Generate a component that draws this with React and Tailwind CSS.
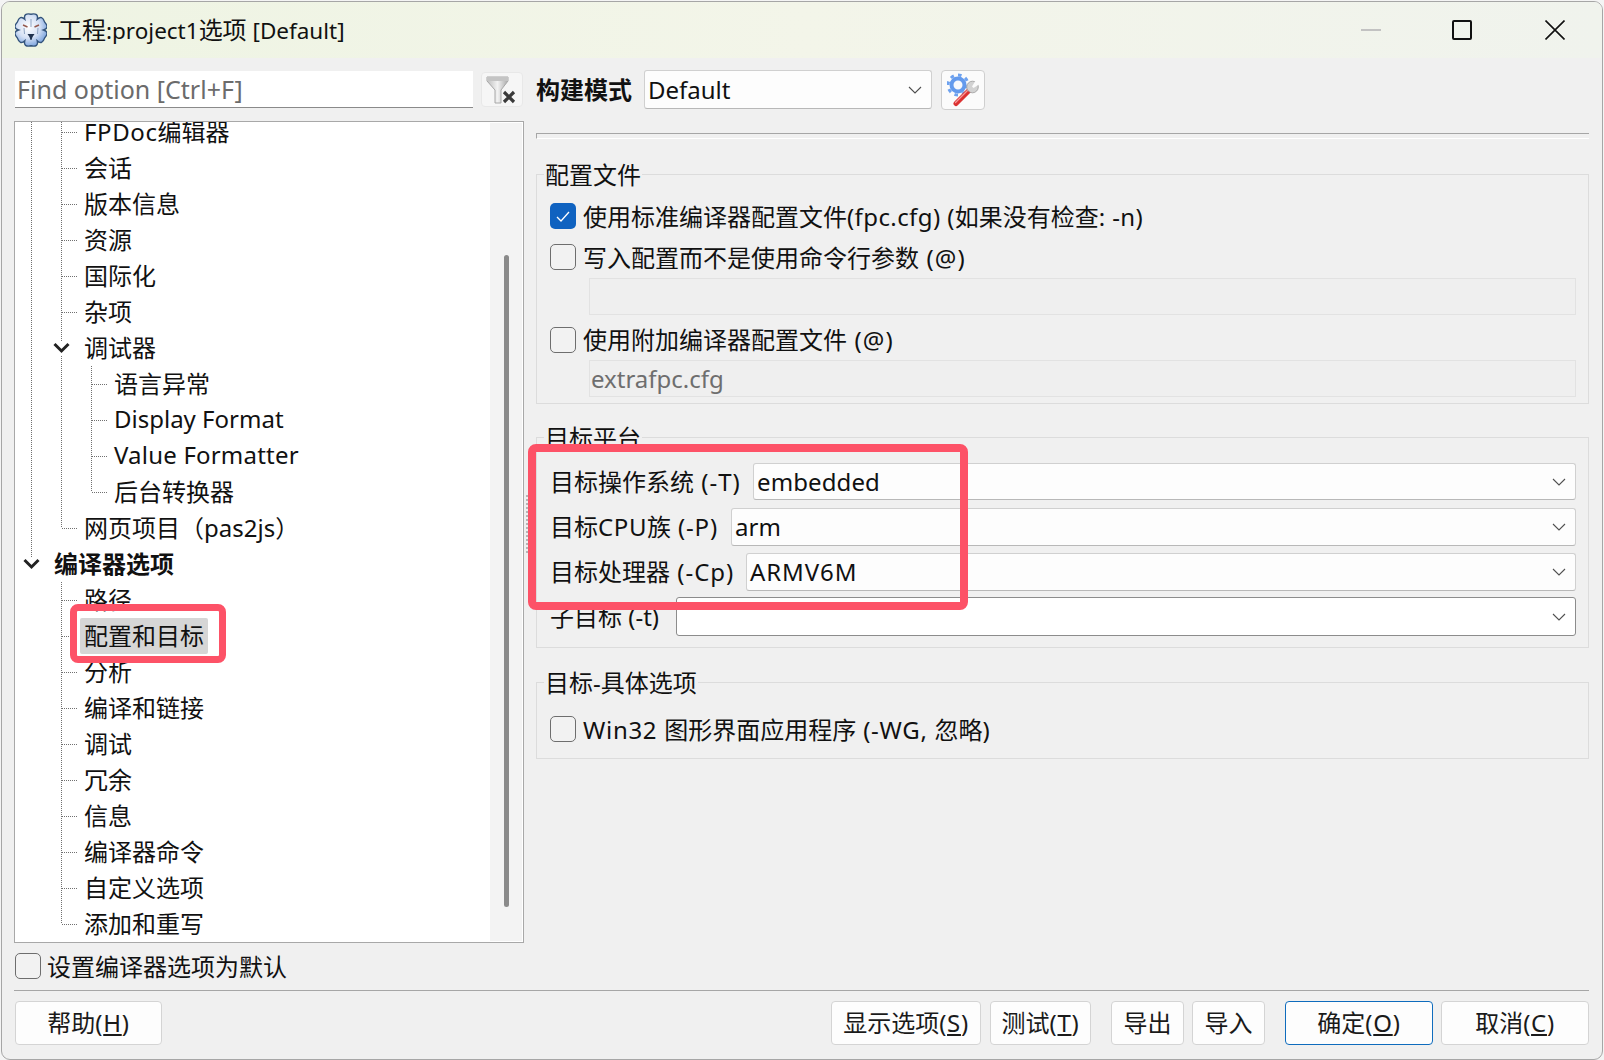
import React from 'react';

const TREE = [
  { label: 'FPDoc编辑器', node: <><span className="tracking-[0.6px]">FPDoc</span>编辑器</>, level: 1, l0: 'full', l1: 'full' },
  { label: '会话', level: 1, l0: 'full', l1: 'full' },
  { label: '版本信息', level: 1, l0: 'full', l1: 'full' },
  { label: '资源', level: 1, l0: 'full', l1: 'full' },
  { label: '国际化', level: 1, l0: 'full', l1: 'full' },
  { label: '杂项', level: 1, l0: 'full', l1: 'full' },
  { label: '调试器', level: 1, l0: 'full', l1: 'full', open: true },
  { label: '语言异常', level: 2, l0: 'full', l1: 'full', l2: 'full' },
  { label: 'Display Format', node: <span className="block pb-[2px]">Display Format</span>, level: 2, l0: 'full', l1: 'full', l2: 'full' },
  { label: 'Value Formatter', node: <span className="block pb-[2px] tracking-[0.2px]">Value Formatter</span>, level: 2, l0: 'full', l1: 'full', l2: 'full' },
  { label: '后台转换器', level: 2, l0: 'full', l1: 'full', l2: 'half' },
  { label: '网页项目（pas2js）', level: 1, l0: 'full', l1: 'half' },
  { label: '编译器选项', level: 0, l0: 'half', open: true, bold: true },
  { label: '路径', level: 1, l1: 'full' },
  { label: '配置和目标', level: 1, l1: 'full', selected: true },
  { label: '分析', level: 1, l1: 'full' },
  { label: '编译和链接', level: 1, l1: 'full' },
  { label: '调试', level: 1, l1: 'full' },
  { label: '冗余', level: 1, l1: 'full' },
  { label: '信息', level: 1, l1: 'full' },
  { label: '编译器命令', level: 1, l1: 'full' },
  { label: '自定义选项', level: 1, l1: 'full' },
  { label: '添加和重写', level: 1, l1: 'half' },
];

const INDENT = { 0: 39, 1: 69, 2: 99 };
const COLS = { l0: 16.5, l1: 46.5, l2: 76.5 };

// dotted connectors + chevron for one tree row
const TreeGuides = ({ row }) => {
  const width = INDENT[row.level];
  const ownCol = [COLS.l0, COLS.l1, COLS.l2][row.level];
  return (
    <svg width={width} height="36" className="shrink-0">
      <g stroke="#707070" strokeDasharray="1 1" shapeRendering="crispEdges">
        {['l0', 'l1', 'l2'].map((k) =>
          row[k] ? <line key={k} x1={COLS[k]} x2={COLS[k]} y1="0" y2={row[k] === 'full' ? 36 : 18} /> : null
        )}
        {!row.open && row.level > 0 && <line x1={ownCol} x2={ownCol + 15} y1="18.5" y2="18.5" />}
      </g>
      {row.open && (
        <>
          <rect x={ownCol - 9} y="11" width="18" height="14" fill="#fff" />
          <path d={`M${ownCol - 7} 14 L${ownCol} 21 L${ownCol + 7} 14`} fill="none" stroke="#222" strokeWidth="3" />
        </>
      )}
    </svg>
  );
};

const Chevron = () => (
  <svg width="14" height="8" viewBox="0 0 14 8" className="shrink-0">
    <path d="M1 1 L7 7 L13 1" fill="none" stroke="#505050" strokeWidth="1.1" />
  </svg>
);

const Checkbox = ({ checked }) =>
  checked ? (
    <span className="flex h-[26px] w-[26px] shrink-0 items-center justify-center rounded-[5px] bg-[#0f62c0]">
      <svg width="14" height="11" viewBox="0 0 14 11">
        <path d="M1 6 L5 10 L13 1" fill="none" stroke="#fff" strokeWidth="1.3" />
      </svg>
    </span>
  ) : (
    <span className="h-[26px] w-[26px] shrink-0 rounded-[5px] border border-[#6e6e6e] bg-[#f2f2f2]" />
  );

const CheckRow = ({ checked, className, textClass, children }) => (
  <div className={`flex h-[26px] items-center whitespace-nowrap ${className || ''}`}>
    <Checkbox checked={checked} />
    <span className={textClass || 'ml-[7px] pt-[2px]'}>{children}</span>
  </div>
);

const Group = ({ title, titleLeft, className, children }) => (
  <div className={`relative w-[1053px] border border-[#dcdcdc] ${className}`}>
    <div className={`absolute top-[-18px] h-[36px] bg-[#f0f0f0] leading-[36px] ${titleLeft}`}>{title}</div>
    {children}
  </div>
);

const SelectBox = ({ value, strong, className }) => (
  <div
    className={`flex items-center justify-between rounded-[3px] border pl-[3px] pr-[9px] ${
      strong ? 'border-[#8c8c8c] bg-white' : 'border-[#d0d0d0] border-b-[#b8b8b8] bg-[#fdfdfd]'
    } ${className}`}
  >
    <span>{value}</span>
    <Chevron />
  </div>
);

const TargetRow = ({ label, labelWidth, pad, value, strong, className }) => (
  <div className={`flex items-center ${className}`}>
    <div className={`shrink-0 whitespace-nowrap ${labelWidth} ${pad}`}>{label}</div>
    <SelectBox value={value} strong={strong} className="h-full flex-1" />
  </div>
);

const DisabledInput = ({ value, className }) => (
  <div
    className={`ml-[39px] h-[37px] w-[987px] border border-[#e2e2e2] bg-[#efefef] pl-px leading-[35px] text-[#6e6e6e] ${className}`}
  >
    {value}
  </div>
);

const Btn = ({ w, primary, className, children }) => (
  <button
    className={`flex h-[44px] shrink-0 items-center justify-center rounded-[4px] border bg-[#fdfdfd] text-[#1a1a1a] ${w} ${
      primary ? 'border-[#0f6cbd]' : 'border-[#d4d4d4]'
    } ${className || ''}`}
  >
    {children}
  </button>
);

// label with its underlined access key, e.g. 帮助(H)
const Mnemonic = ({ text, keyChar }) => (
  <span>
    {text}
    <span className="tracking-[0.7px]">
      (<span className="underline">{keyChar}</span>)
    </span>
  </span>
);

// six rounded lobes, the gear outline of the app icon
const gearPath = (() => {
  const cx = 16;
  const cy = 17;
  const at = (deg, r) => {
    const a = (deg * Math.PI) / 180;
    return `${(cx + r * Math.cos(a)).toFixed(2)} ${(cy + r * Math.sin(a)).toFixed(2)}`;
  };
  let d = `M${at(-120, 12.5)}`;
  for (let i = 0; i < 6; i++) {
    const lobe = -90 + i * 60;
    d += ` Q${at(lobe - 24, 19)} ${at(lobe, 15.8)} Q${at(lobe + 24, 19)} ${at(lobe + 30, 12.5)}`;
  }
  return d + ' Z';
})();

const LazarusLogo = () => (
  <svg width="32" height="34" viewBox="0 0 32 34" className="shrink-0">
    <defs>
      <radialGradient id="gearFill" cx="0.42" cy="0.4" r="0.7">
        <stop offset="0" stopColor="#ffffff" />
        <stop offset="0.5" stopColor="#d5e1f5" />
        <stop offset="1" stopColor="#6594d8" />
      </radialGradient>
    </defs>
    <path d={gearPath} fill="url(#gearFill)" stroke="#34547c" strokeWidth="1.4" />
    <path d="M8 12 L12.5 14 M24 12 L19.5 14" stroke="#94584c" strokeWidth="1.4" fill="none" />
    <path d="M9 15 L9.5 21 M23 15 L22.5 21 M16 6 L16 14" stroke="#8fa5c4" strokeWidth="1" fill="none" />
    <path d="M12.5 21 L19.5 21 L17.5 24 L16.5 27 L15.5 27 L14.5 24 Z" fill="#20324e" />
  </svg>
);

const FilterClearIcon = () => (
  <svg width="32" height="30" viewBox="0 0 32 30">
    <defs>
      <linearGradient id="funnelFill" x1="0" x2="1" y1="0" y2="0">
        <stop offset="0" stopColor="#bdbdbd" />
        <stop offset="0.5" stopColor="#f2f2f2" />
        <stop offset="1" stopColor="#a9a9a9" />
      </linearGradient>
    </defs>
    <path d="M1 2 H22 V6 L15 15 V28 H9 V15 L1 6 Z" fill="url(#funnelFill)" stroke="#a8a8a8" strokeWidth="1" />
    <rect x="1" y="2" width="21" height="4" fill="#c4c4c4" />
    <path d="M18 17 L28 27 M28 17 L18 27" stroke="#3a3a3a" strokeWidth="3.2" />
  </svg>
);

const BuildModesIcon = () => (
  <svg width="32" height="34" viewBox="0 0 32 34">
    <circle cx="11" cy="12" r="10" fill="none" stroke="#6ea2ef" strokeWidth="3" strokeDasharray="3.6 4.2" />
    <circle cx="11" cy="12" r="6.5" fill="#f7f9fd" stroke="#639aed" strokeWidth="4" />
    <path d="M9 30.5 L23 16.5" stroke="#dc3232" strokeWidth="5" strokeLinecap="round" />
    <path d="M8.5 29.5 L21 17" stroke="#f59a9a" strokeWidth="1.2" strokeLinecap="round" />
    <circle cx="25.5" cy="14" r="5.8" fill="#d2d2d2" stroke="#9a9a9a" strokeWidth="0.8" />
    <path d="M25 13.5 L29 7 L33 11 L26.5 15 Z" fill="#fbfbfb" />
  </svg>
);

export default function App() {
  return (
    <div className="relative h-[1060px] w-[1604px] overflow-hidden bg-[#f4f4f4] pl-px pt-px font-['Noto_Sans','Noto_Sans_CJK_SC',sans-serif] text-[24px] leading-none text-[#111]">
      <div className="h-[1059px] w-[1602px] overflow-hidden rounded-[9px] border border-[#a6a6a6] bg-[#f0f0f0]">
        {/* title bar */}
        <div className="flex h-[56px] items-center bg-linear-to-r from-[#eef4e3] via-[#f3f5e9] to-[#f0f3ed]">
          <div className="ml-[13px]">
            <LazarusLogo />
          </div>
          <div className="ml-[11px] whitespace-nowrap">
            工程<span className="text-[22.5px]">:project1</span>选项<span className="text-[22.5px]"> [Default]</span>
          </div>
          <div className="ml-auto flex items-center">
            <div className="h-[2px] w-[20px] bg-[#c2c2c2]" />
            <div className="ml-[71px] h-[20px] w-[20px] rounded-[2px] border-2 border-[#111]" />
            <svg width="20" height="20" viewBox="0 0 20 20" className="ml-[73px] mr-[37px]">
              <path d="M0.5 0.5 L19.5 19.5 M19.5 0.5 L0.5 19.5" stroke="#111" strokeWidth="1.6" />
            </svg>
          </div>
        </div>

        <div className="flex h-[932px] pl-[12px]">
          {/* left column */}
          <div className="w-[510px] shrink-0 pt-[13px]">
            <div className="flex h-[37px] items-center pl-px">
              <div className="h-full w-[458px] border-b border-[#8a8a8a] bg-white pl-[2px] text-[25px] leading-[36px] text-[#6b6b6b]">
                Find option [Ctrl+F]
              </div>
              <div className="ml-[8px] flex h-[35px] w-[42px] items-center justify-center rounded-[4px] border border-[#e8e8e8] bg-[#f6f6f6]">
                <FilterClearIcon />
              </div>
            </div>
            <div className="mt-[13px] flex h-[822px] overflow-hidden border border-[#a8a8a8] bg-white">
              <div className="mt-[-8px] w-[474px] shrink-0">
                {TREE.map((row) => (
                  <div key={row.label} className="flex h-[36px] items-center whitespace-nowrap">
                    <TreeGuides row={row} />
                    <span
                      className={
                        row.selected
                          ? 'ml-[-4px] flex h-[36px] items-center rounded-[2px] bg-[#d6d6d6] px-[4px]'
                          : row.bold
                            ? 'font-bold'
                            : ''
                      }
                    >
                      {row.node || row.label}
                    </span>
                  </div>
                ))}
              </div>
              <div className="m-px flex-1 bg-[#f3f3f3] pl-[14px] pt-[132px]">
                <div className="h-[652px] w-[5px] rounded-full bg-[#8a8a8a]" />
              </div>
            </div>
            <CheckRow className="mt-[10px] ml-px" textClass="ml-[6px] pt-[2px]">设置编译器选项为默认</CheckRow>
          </div>

          {/* right column */}
          <div className="relative ml-[12px] w-[1053px] shrink-0 pt-[12px]">
            {/* splitter grip, mostly under the annotation */}
            <div className="absolute left-[-10px] top-[437px] h-[58px] w-[2px] border-l-2 border-dotted border-[#b5b5b5]" />
            <div className="flex h-[39px] items-center">
              <div className="w-[108px] shrink-0 font-bold">构建模式</div>
              <SelectBox value="Default" className="h-full w-[288px]" />
              <div className="ml-[9px] flex h-[40px] w-[44px] items-center justify-center rounded-[4px] border border-[#cfcfcf] bg-[#fbfbfb]">
                <BuildModesIcon />
              </div>
            </div>
            <div className="mt-[24px] h-[6px] border-l border-t border-b border-l-[#a6a6a6] border-t-[#a6a6a6] border-b-white" />

            <Group title="配置文件" titleLeft="left-[7px] px-px top-[-17px]" className="mt-[35px] h-[230px] pl-[13px] pt-[28px]">
              <CheckRow checked>
                使用标准编译器配置文件<span className="tracking-[0.4px]">(fpc.cfg) (</span>如果没有检查<span className="tracking-[0.4px]">: -n)</span>
              </CheckRow>
              <CheckRow className="mt-[15px]">
                写入配置而不是使用命令行参数<span className="tracking-[1.2px]"> (@)</span>
              </CheckRow>
              <DisabledInput className="mt-[8px]" />
              <CheckRow className="mt-[12px]" textClass="ml-[7px]">
                使用附加编译器配置文件<span className="tracking-[1.2px]"> (@)</span>
              </CheckRow>
              <DisabledInput value="extrafpc.cfg" className="mt-[7px]" />
            </Group>

            <Group title="目标平台" titleLeft="left-[7px] px-px" className="mt-[33px] h-[211px] pr-[12px] pt-[25px]">
              <TargetRow
                label={<>目标操作系统<span className="tracking-[1px]"> (-T)</span></>}
                labelWidth="w-[216px]"
                pad="pl-[13px]"
                value={<span className="tracking-[0.1px]">embedded</span>}
                className="h-[37px]"
              />
              <TargetRow
                label={<>目标<span className="tracking-[0.6px]">CPU</span>族<span className="tracking-[0.8px]"> (-P)</span></>}
                labelWidth="w-[194px]"
                pad="pl-[13px]"
                value="arm"
                className="mt-[8px] h-[38px]"
              />
              <TargetRow
                label={<>目标处理器<span className="tracking-[1px]"> (-Cp)</span></>}
                labelWidth="w-[209px]"
                pad="pl-[13px]"
                value={<span className="tracking-[0.9px]">ARMV6M</span>}
                className="mt-[7px] h-[38px]"
              />
              <TargetRow label="子目标 (-t)" labelWidth="w-[139px]" pad="pl-[13px]" strong className="mt-[6px] h-[39px]" />
            </Group>

            <Group title="目标-具体选项" titleLeft="left-[7px] px-px" className="mt-[34px] h-[77px] pl-[13px] pt-[33px]">
              <CheckRow>
                <span className="tracking-[0.7px]">Win32 </span>图形界面应用程序<span className="tracking-[0.7px]"> (-WG, </span>忽略<span className="tracking-[0.7px]">)</span>
              </CheckRow>
            </Group>
          </div>
        </div>

        {/* bottom buttons */}
        <div className="ml-[12px] h-px w-[1575px] bg-[#a6a6a6]" />
        <div className="ml-[12px] mt-[10px] flex w-[1575px]">
          <Btn w="w-[147px]" className="ml-px">
            <Mnemonic text="帮助" keyChar="H" />
          </Btn>
          <Btn w="w-[150px]" className="ml-auto">
            <Mnemonic text="显示选项" keyChar="S" />
          </Btn>
          <Btn w="w-[101px]" className="ml-[9px]">
            <Mnemonic text="测试" keyChar="T" />
          </Btn>
          <Btn w="w-[73px]" className="ml-[20px]">导出</Btn>
          <Btn w="w-[73px]" className="ml-[8px]">导入</Btn>
          <Btn w="w-[148px]" primary className="ml-[20px]">
            <Mnemonic text="确定" keyChar="O" />
          </Btn>
          <Btn w="w-[148px]" className="ml-[8px]">
            <Mnemonic text="取消" keyChar="C" />
          </Btn>
        </div>
      </div>

      {/* red annotation boxes drawn over the dialog */}
      <div className="absolute left-[70px] top-[604px] h-[59px] w-[156px] rounded-[8px] border-[7px] border-[#fd5267]" />
      <div className="absolute left-[528px] top-[444px] h-[166px] w-[440px] rounded-[8px] border-[8px] border-[#fd5267]" />
    </div>
  );
}
